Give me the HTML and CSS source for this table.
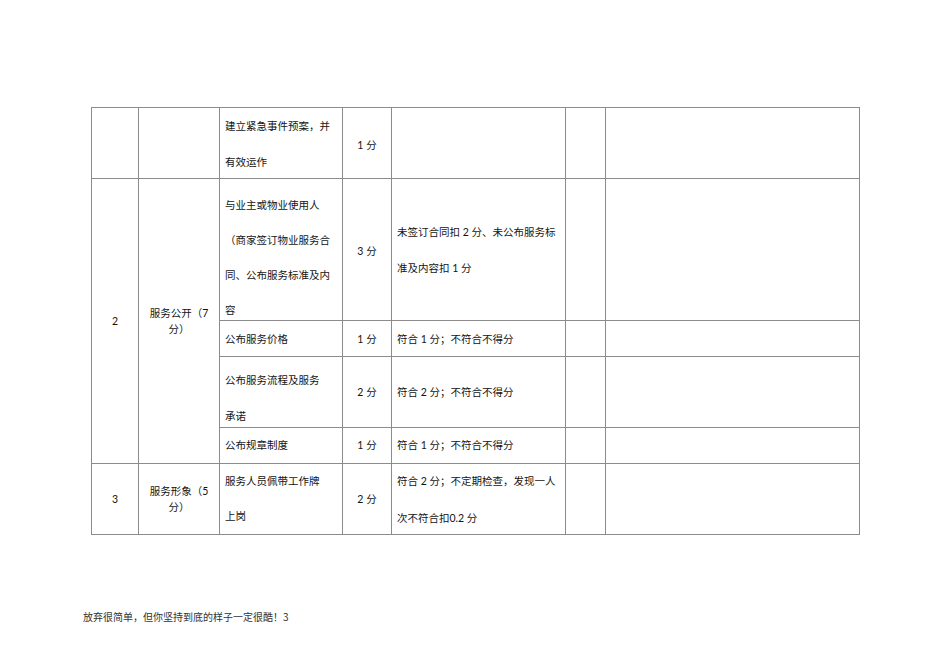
FILE: index.html
```html
<!DOCTYPE html>
<html lang="zh-CN">
<head>
<meta charset="utf-8">
<title>物业服务评分表</title>
<link rel="stylesheet" href="styles.css">
</head>
<body>
<div class="sheet">
  <table class="grid">
    <colgroup>
      <col class="w1"><col class="w2"><col class="w3"><col class="w4"><col class="w5"><col class="w6"><col class="w7">
    </colgroup>
    <tr class="h71">
      <td></td>
      <td></td>
      <td class="txt"><div class="c pt11 g22"><div class="ln">建立紧急事件预案，并</div><div class="ln">有效运作</div></div></td>
      <td class="num"><div class="c pt30"><div class="ln">1 分</div></div></td>
      <td></td>
      <td></td>
      <td></td>
    </tr>
    <tr class="h142">
      <td class="mid" rowspan="4"><div class="ln16">2</div></td>
      <td class="mid" rowspan="4"><div class="ln16">服务公开（7</div><div class="ln16">分）</div></td>
      <td class="txt"><div class="c pt19 g21"><div class="ln">与业主或物业使用人</div><div class="ln">（商家签订物业服务合</div><div class="ln">同、公布服务标准及内</div><div class="ln">容</div></div></td>
      <td class="num"><div class="c pt65"><div class="ln">3 分</div></div></td>
      <td class="txt"><div class="c pt46 g22"><div class="ln">未签订合同扣 2 分、未公布服务标</div><div class="ln">准及内容扣 1 分</div></div></td>
      <td></td>
      <td></td>
    </tr>
    <tr class="h36">
      <td class="txt"><div class="c pt11"><div class="ln">公布服务价格</div></div></td>
      <td class="num"><div class="c pt11"><div class="ln">1 分</div></div></td>
      <td class="txt"><div class="c pt11"><div class="ln">符合 1 分；不符合不得分</div></div></td>
      <td></td>
      <td></td>
    </tr>
    <tr class="h71">
      <td class="txt"><div class="c pt16 g22"><div class="ln">公布服务流程及服务</div><div class="ln">承诺</div></div></td>
      <td class="num"><div class="c pt28"><div class="ln">2 分</div></div></td>
      <td class="txt"><div class="c pt28"><div class="ln">符合 2 分；不符合不得分</div></div></td>
      <td></td>
      <td></td>
    </tr>
    <tr class="h36">
      <td class="txt"><div class="c pt10"><div class="ln">公布规章制度</div></div></td>
      <td class="num"><div class="c pt10"><div class="ln">1 分</div></div></td>
      <td class="txt"><div class="c pt10"><div class="ln">符合 1 分；不符合不得分</div></div></td>
      <td></td>
      <td></td>
    </tr>
    <tr class="h71">
      <td class="mid"><div class="ln16">3</div></td>
      <td class="mid"><div class="ln16">服务形象（5</div><div class="ln16">分）</div></td>
      <td class="txt"><div class="c pt10 g21"><div class="ln">服务人员佩带工作牌</div><div class="ln">上岗</div></div></td>
      <td class="num"><div class="c pt28"><div class="ln">2 分</div></div></td>
      <td class="txt"><div class="c pt10 g23"><div class="ln">符合 2 分；不定期检查，发现一人</div><div class="ln">次不符合扣0.2 分</div></div></td>
      <td></td>
      <td></td>
    </tr>
  </table>
  <p class="footer">放弃很简单，但你坚持到底的样子一定很酷！3</p>
</div>
</body>
</html>
```
FILE: styles.css
```css
html, body {
  margin: 0;
  padding: 0;
  background: #ffffff;
}

.sheet {
  padding: 107px 0 0 91px;
  font-family: Lato, "Noto Sans CJK SC", sans-serif;
  color: #141414;
}

.grid {
  border-collapse: collapse;
  table-layout: fixed;
  width: 768px;
}

.w1 { width: 47px; }
.w2 { width: 81px; }
.w3 { width: 123px; }
.w4 { width: 49px; }
.w5 { width: 174px; }
.w6 { width: 40px; }
.w7 { width: 254px; }

.grid td {
  border: 1px solid #8c8c8c;
  padding: 0 5px;
  vertical-align: top;
  font-size: 10.5px;
  white-space: nowrap;
}

.h71 { height: 71px; }
.h142 { height: 142px; }
.h36 { height: 36px; }

.grid td.mid {
  vertical-align: middle;
  text-align: center;
  padding: 0 4px;
}

.grid td.num {
  text-align: center;
}

.c {
  display: flex;
  flex-direction: column;
}

.ln {
  line-height: 14px;
  height: 14px;
}

.ln16 {
  line-height: 16px;
}

.g21 { gap: 21px; }
.g22 { gap: 22px; }
.g23 { gap: 23px; }

.pt10 { padding-top: 10px; }
.pt11 { padding-top: 11px; }
.pt16 { padding-top: 16px; }
.pt19 { padding-top: 19px; }
.pt28 { padding-top: 28px; }
.pt30 { padding-top: 30px; }
.pt46 { padding-top: 46px; }
.pt65 { padding-top: 65px; }

.footer {
  margin: 75px 0 0 -8px;
  font-size: 10px;
  line-height: 14px;
  color: #333333;
  font-family: "Noto Sans CJK SC", sans-serif;
}
```
